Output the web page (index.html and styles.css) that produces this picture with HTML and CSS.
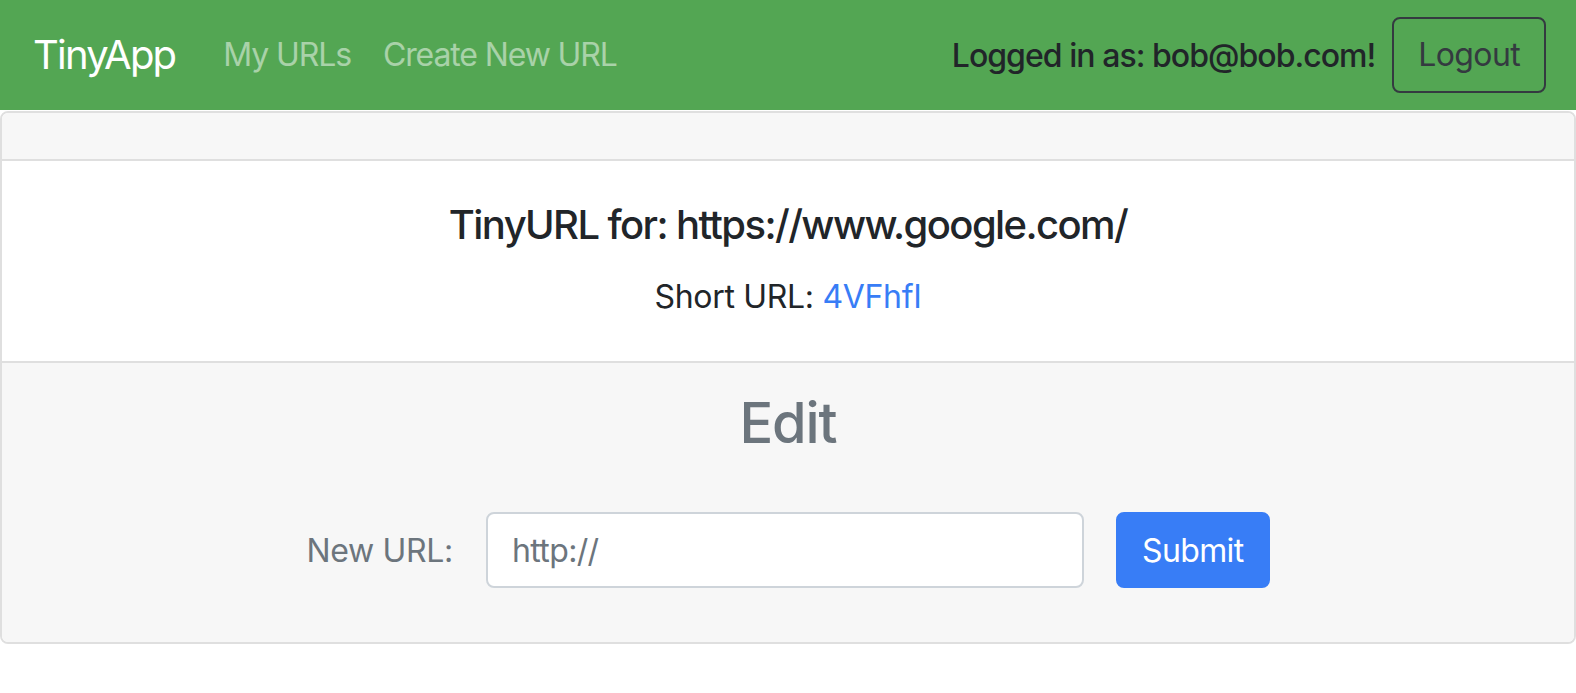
FILE: index.html
```html
<!DOCTYPE html>
<html lang="en">
<head>
<meta charset="utf-8">
<title>TinyApp</title>
<link rel="stylesheet" href="styles.css">
</head>
<body>
<nav class="navbar">
  <a class="brand" href="#">TinyApp</a>
  <ul class="nav-links">
    <li><a href="#">My URLs</a></li>
    <li><a href="#">Create New URL</a></li>
  </ul>
  <div class="user">
    <span class="logged">Logged in as: bob@bob.com!</span>
    <button class="btn-logout" type="button">Logout</button>
  </div>
</nav>
<main class="card">
  <div class="card-header"></div>
  <div class="card-body">
    <h5 class="card-title">TinyURL for: https://www.google.com/</h5>
    <p class="card-text">Short URL: <a href="#">4VFhfI</a></p>
  </div>
  <div class="card-footer">
    <h3 class="edit-title">Edit</h3>
    <form class="edit-form">
      <label class="edit-label" for="longURL">New URL:</label>
      <input class="edit-input" id="longURL" type="text" placeholder="http://">
      <button class="btn-submit" type="submit">Submit</button>
    </form>
  </div>
</main>
</body>
</html>
```

FILE: styles.css
```css
* { box-sizing: border-box; }

body {
  margin: 0;
  font-family: Inter, "Noto Sans", sans-serif;
  letter-spacing: -0.02em;
  color: #212529;
  background: #fff;
}

.navbar {
  display: flex;
  align-items: center;
  height: 110px;
  padding: 0 30px 0 33px;
  background: #53a653;
}

.brand {
  font-size: 40px;
  line-height: 60px;
  letter-spacing: -0.045em;
  color: #fff;
  text-decoration: none;
  margin-right: 32px;
}

.nav-links {
  display: flex;
  list-style: none;
  margin: 0;
  padding: 0;
}

.nav-links a {
  display: block;
  padding: 16px;
  font-size: 32px;
  line-height: 48px;
  letter-spacing: -0.035em;
  color: rgba(255, 255, 255, 0.5);
  text-decoration: none;
}

.user {
  margin-left: auto;
  display: flex;
  align-items: center;
  gap: 17px;
}

.logged {
  font-size: 32px;
  font-weight: 500;
  letter-spacing: -0.03em;
  color: #212529;
}

.btn-logout {
  font-family: inherit;
  font-size: 32px;
  line-height: 48px;
  letter-spacing: -0.02em;
  padding: 12px 24px;
  border: 2px solid #343a40;
  border-radius: 8px;
  background: transparent;
  color: #343a40;
}

.card {
  display: block;
  margin-top: 1px;
  border: 2px solid #dfdfdf;
  border-radius: 8px;
  overflow: hidden;
}

.card-header {
  height: 48px;
  background: #f7f7f7;
  border-bottom: 2px solid #dfdfdf;
}

.card-body {
  padding: 40px;
  text-align: center;
}

.card-title {
  margin: 0 0 24px;
  font-size: 40px;
  line-height: 48px;
  font-weight: 500;
  letter-spacing: -0.04em;
}

.card-text {
  margin: 0;
  font-size: 32px;
  line-height: 48px;
}

.card-text a {
  color: #387df6;
  text-decoration: none;
}

.card-footer {
  background: #f7f7f7;
  border-top: 2px solid #dfdfdf;
  padding: 27px 40px 22px;
  text-align: center;
}

.edit-title {
  margin: 0 0 55px;
  font-size: 56px;
  line-height: 67px;
  font-weight: 500;
  letter-spacing: -0.02em;
  color: #6c757d;
}

.edit-form {
  display: flex;
  justify-content: center;
  align-items: center;
  margin-bottom: 32px;
}

.edit-label {
  font-size: 32px;
  color: #6c757d;
  margin-right: 33px;
}

.edit-input {
  width: 598px;
  height: 76px;
  padding: 12px 24px;
  font-family: inherit;
  font-size: 32px;
  letter-spacing: -0.02em;
  color: #495057;
  background: #fff;
  border: 2px solid #ced4da;
  border-radius: 8px;
}

.edit-input::placeholder {
  color: #6c757d;
}

.btn-submit {
  margin-left: 32px;
  height: 76px;
  padding: 12px 24px;
  font-family: inherit;
  font-size: 32px;
  letter-spacing: -0.02em;
  color: #fff;
  background: #387df6;
  border: 2px solid #387df6;
  border-radius: 8px;
}
```
